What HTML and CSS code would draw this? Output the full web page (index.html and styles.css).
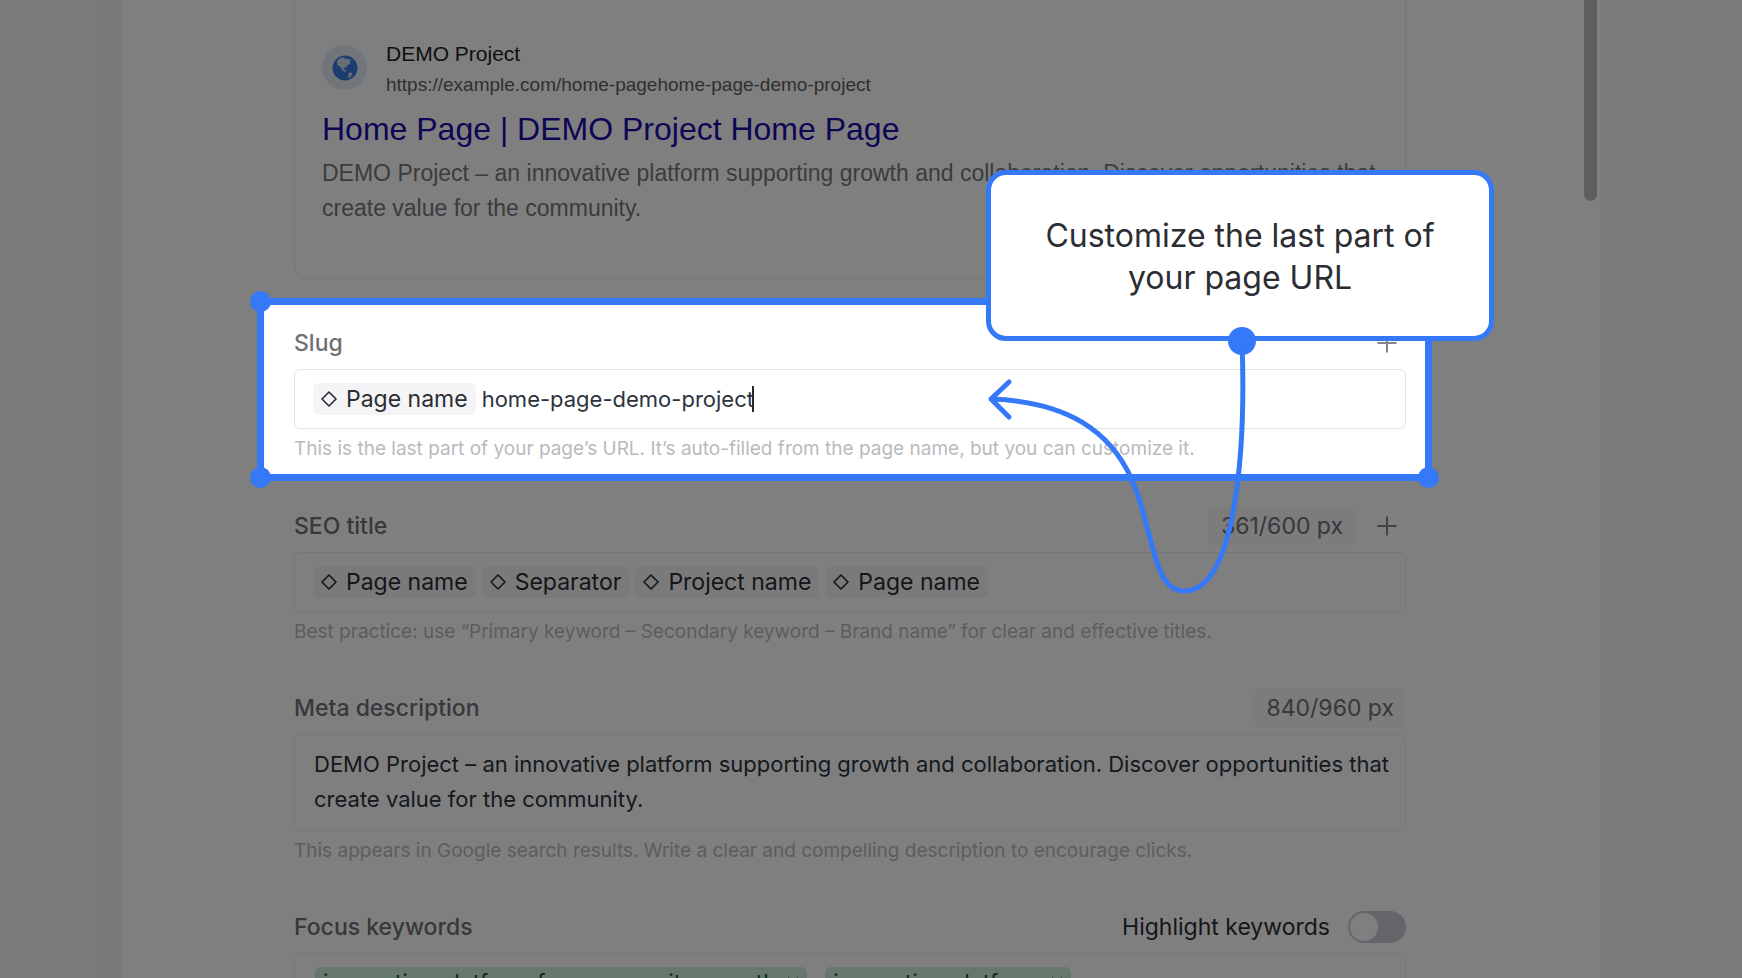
FILE: index.html
```html
<!DOCTYPE html>
<html lang="en">
<head>
    <meta charset="UTF-8">
    <meta name="viewport" content="width=device-width, initial-scale=1.0">
    <title>Page SEO settings</title>
    <link rel="stylesheet" href="styles.css">
</head>
<body>
<svg width="0" height="0" class="sprite">
    <symbol id="diamond" viewBox="0 0 16 16"><path d="M8 1 15 8 8 15 1 8Z" fill="none" stroke="currentColor" stroke-width="1.6" stroke-linejoin="round"/></symbol>
    <symbol id="plus" viewBox="0 0 20 20"><path d="M10 0.5V19.5M0.5 10H19.5" fill="none" stroke="currentColor" stroke-width="2"/></symbol>
    <symbol id="cross" viewBox="0 0 12 12"><path d="M1 1 11 11M11 1 1 11" fill="none" stroke="currentColor" stroke-width="2"/></symbol>
</svg>

<div class="app">
    <div class="side-left"></div>
    <div class="side-strip"></div>

    <main class="panel">
        <div class="scroll-thumb"></div>

        <!-- Search result preview -->
        <section class="preview">
            <div class="preview-site">
                <span class="favicon">
                    <svg viewBox="0 0 26 26" width="26" height="26">
                        <circle cx="13" cy="13" r="12.5" fill="#3b78e0"/>
                        <path d="M5 6C7 3.500 9 2.300 12 2.200L13 4 15.500 3.500 19 5 17.500 7 18.500 9 15.500 10 14 12.500 11.500 13 11.500 14.500 14.500 15.500 14 17 10.500 15.500 8.500 12 5.500 10Z" fill="#cfdcec"/>
                        <path d="M16.500 18 19.500 17.500 20.500 19.500 18 22.500 15.500 22.500 16.800 20.500Z" fill="#cfdcec"/>
                    </svg>
                </span>
                <div>
                    <div class="preview-name">DEMO Project</div>
                    <div class="preview-url">https://example.com/home-pagehome-page-demo-project</div>
                </div>
            </div>
            <a href="#" class="preview-title">Home Page | DEMO Project Home Page</a>
            <p class="preview-text">DEMO Project – an innovative platform supporting growth and collaboration. Discover opportunities that create value for the community.</p>
        </section>

        <!-- Slug, the highlighted step -->
        <section class="spotlight">
            <div class="field-head">
                <label for="slug">Slug</label>
                <button type="button" class="add-btn" aria-label="Add variable"><svg width="20" height="20"><use href="#plus"/></svg></button>
            </div>
            <div class="box">
                <span class="chip"><svg width="16" height="16"><use href="#diamond"/></svg>Page name</span>
                <input type="text" id="slug" class="slug-input" value="home-page-demo-project">
                <span class="caret"></span>
            </div>
            <p class="hint">This is the last part of your page’s URL. It’s auto-filled from the page name, but you can customize it.</p>

            <span class="handle handle-tl"></span>
            <span class="handle handle-bl"></span>
            <span class="handle handle-br"></span>

            <div class="callout">
                <p class="callout-text">Customize the last part of your page URL</p>
                <svg class="callout-arrow" viewBox="986 320 280 280" width="280" height="280">
                    <circle cx="1242" cy="341" r="14" fill="#3579f8"/>
                    <g fill="none" stroke="#3579f8" stroke-width="5" stroke-linecap="round" stroke-linejoin="round">
                        <path d="M1242 341C1246 450 1236 591 1184 591C1152 591 1154 530 1132 480C1110 430 1066 402 992 399"/>
                        <path d="M1009 382 991 399 1009 417"/>
                    </g>
                </svg>
            </div>
        </section>

        <section class="field">
            <div class="field-head">
                <span class="field-label">SEO title</span>
                <span class="counter">361/600 px</span>
                <button type="button" class="add-btn" aria-label="Add variable"><svg width="20" height="20"><use href="#plus"/></svg></button>
            </div>
            <div class="box">
                <span class="chip"><svg width="16" height="16"><use href="#diamond"/></svg>Page name</span>
                <span class="chip"><svg width="16" height="16"><use href="#diamond"/></svg>Separator</span>
                <span class="chip"><svg width="16" height="16"><use href="#diamond"/></svg>Project name</span>
                <span class="chip"><svg width="16" height="16"><use href="#diamond"/></svg>Page name</span>
            </div>
            <p class="hint">Best practice: use “Primary keyword – Secondary keyword – Brand name” for clear and effective titles.</p>
        </section>

        <section class="field">
            <div class="field-head">
                <label for="meta">Meta description</label>
                <span class="counter">840/960 px</span>
            </div>
            <textarea id="meta" class="box meta-input" rows="2">DEMO Project – an innovative platform supporting growth and collaboration. Discover opportunities that create value for the community.</textarea>
            <p class="hint">This appears in Google search results. Write a clear and compelling description to encourage clicks.</p>
        </section>

        <section class="field">
            <div class="field-head">
                <span class="field-label">Focus keywords</span>
                <label for="highlight" class="toggle-label">Highlight keywords</label>
                <input type="checkbox" id="highlight" class="toggle">
            </div>
            <div class="box keywords">
                <span class="keyword">innovative platform for community growth<button type="button" aria-label="Remove"><svg width="12" height="12"><use href="#cross"/></svg></button></span>
                <span class="keyword">innovative platform<button type="button" aria-label="Remove"><svg width="12" height="12"><use href="#cross"/></svg></button></span>
            </div>
        </section>
    </main>

    <div class="side-right"></div>
</div>
</body>
</html>
```
FILE: styles.css
```css
* {
    box-sizing: border-box;
}
body {
    margin: 0;
    font-family: Inter, "Liberation Sans", sans-serif;
    font-size: 23px;
    color: #2c2d33;
    background: #fff;
}
p {
    margin: 0;
}
button {
    padding: 0;
    border: none;
    background: none;
    color: inherit;
    cursor: pointer;
}
svg {
    display: block;
    flex: none;
}
.sprite {
    position: absolute;
}
.app {
    display: flex;
    height: 100vh;
    overflow: hidden;
}
.side-left {
    width: 94px;
    background: #f7f7fb;
}
.side-strip {
    width: 28px;
    background: #f4f4f7;
}
.side-right {
    width: 142px;
    background: #f6f6fb;
}
.panel {
    position: relative;
    flex: 1;
    min-width: 0;
    padding: 0 194px 0 172px;
    background: #fff;
}
.scroll-thumb {
    position: absolute;
    top: 0;
    right: 3px;
    width: 13px;
    height: 201px;
    background: #bcbcbc;
    border-radius: 0 0 7px 7px;
}

/* preview card */
.preview {
    height: 279px;
    padding: 38px 18px 0 27px;
    border: 1px solid #ececee;
    border-top: none;
    border-radius: 0 0 12px 12px;
    font-family: "Liberation Sans", Arial, sans-serif;
}
.preview-site {
    display: flex;
    align-items: flex-start;
    gap: 19px;
}
.favicon {
    display: flex;
    align-items: center;
    justify-content: center;
    width: 45px;
    height: 45px;
    margin-top: 7px;
    border-radius: 50%;
    background: #e2ecf6;
}
.preview-name {
    font-size: 21px;
    line-height: 31px;
    color: #202124;
}
.preview-url {
    font-size: 19px;
    line-height: 31px;
    color: #5f6063;
}
.preview-title {
    display: block;
    padding: 10px 0 8px;
    font-size: 32px;
    line-height: 38px;
    color: #1a0dab;
    text-decoration: none;
}
.preview-text {
    font-size: 23px;
    line-height: 35px;
    color: #77787b;
}

/* fields */
.field {
    padding-bottom: 44px;
}
.field-head {
    display: flex;
    align-items: center;
    height: 38px;
    margin-bottom: 7px;
    color: #6f7076;
}
.field-head label:first-child,
.field-label {
    margin-right: auto;
    font-weight: 500;
}
.counter {
    padding: 0 12px;
    line-height: 38px;
    border-radius: 4px;
    background: #f8f8f9;
}
.add-btn {
    display: flex;
    justify-content: center;
    width: 38px;
    color: #85868b;
}
.counter + .add-btn {
    margin-left: 13px;
}
.box {
    display: flex;
    align-items: center;
    gap: 6px;
    width: 100%;
    height: 60px;
    padding: 0 18px;
    border: 1px solid #e2e2e4;
    border-radius: 6px;
    background: #fff;
}
.field .box {
    border-color: #eeeef0;
}
.chip {
    display: flex;
    align-items: center;
    gap: 9px;
    padding: 0 8px;
    line-height: 32px;
    border-radius: 6px;
    background: #f4f4f6;
}
.slug-input {
    field-sizing: content;
    padding: 0;
    border: none;
    outline: none;
    font: inherit;
    font-size: 22px;
    color: #2c333d;
}
.caret {
    width: 2px;
    height: 26px;
    margin-left: -8px;
    background: #26282f;
}
.hint {
    padding-top: 7px;
    font-size: 19px;
    line-height: 26px;
    color: #b9babd;
}
.meta-input {
    display: block;
    height: 97px;
    padding: 12px 8px 12px 19px;
    font: inherit;
    font-size: 22px;
    line-height: 35px;
    color: #2c333d;
    resize: none;
    outline: none;
    overflow: hidden;
}
.toggle-label {
    margin-right: 18px;
    color: #2c2d33;
}
.toggle {
    display: flex;
    appearance: none;
    width: 58px;
    height: 32px;
    margin: 0;
    padding: 2px;
    border-radius: 16px;
    background: #c8c8d6;
}
.toggle::before {
    content: "";
    width: 28px;
    height: 28px;
    border-radius: 50%;
    background: #fff;
}
.keywords {
    gap: 18px;
    padding: 0 20px;
}
.keyword {
    display: flex;
    align-items: center;
    gap: 10px;
    padding: 0 8px;
    line-height: 32px;
    border-radius: 6px;
    background: #cdeedd;
    color: #1d5a3c;
}

/* highlighted step, its shadow dims the rest of the page */
.spotlight {
    position: relative;
    z-index: 1;
    margin: 19px -26px 26px -37px;
    padding: 19px 19px 12px 30px;
    border: 7px solid #3579f8;
    background: #fff;
    box-shadow: 0 0 0 9999px rgba(0, 0, 0, 0.5);
}
.handle {
    position: absolute;
    width: 21px;
    height: 21px;
    border-radius: 50%;
    background: #3579f8;
}
.handle-tl {
    top: -14px;
    left: -14px;
}
.handle-bl {
    bottom: -14px;
    left: -14px;
}
.handle-br {
    right: -14px;
    bottom: -14px;
}
.callout {
    position: absolute;
    top: -135px;
    right: -69px;
    width: 508px;
}
.callout-text {
    padding: 40px 40px 37px;
    border: 5px solid #3579f8;
    border-radius: 20px;
    background: #fff;
    font-size: 32px;
    line-height: 42px;
    text-align: center;
}
.callout-arrow {
    position: absolute;
    top: 150px;
    left: 0;
}
```
